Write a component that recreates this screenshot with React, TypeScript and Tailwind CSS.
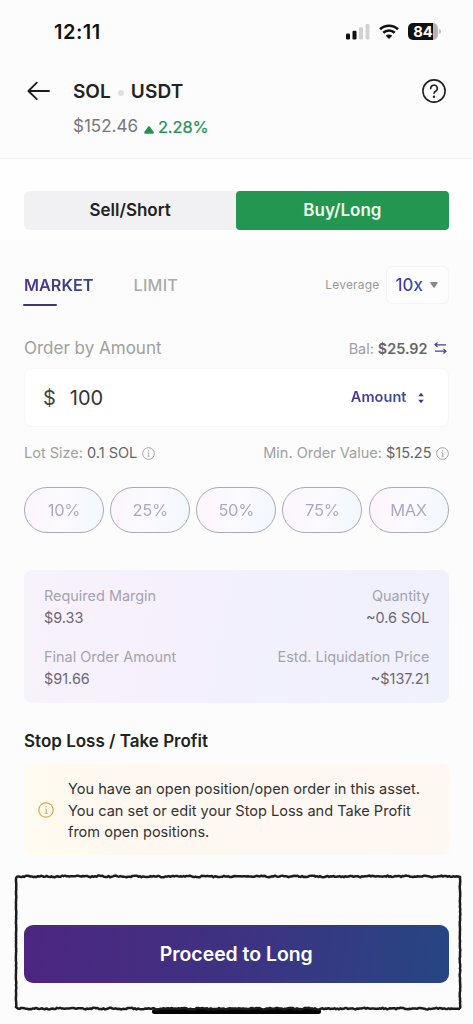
import React from "react";

const percents = ["10%", "25%", "50%", "75%", "MAX"];

// Hand-drawn looking stroke running round the proceed button
const roughPath = () => {
  const noise = (i: number) => {
    const n = Math.sin(i * 12.9898) * 43758.5453;
    return (n - Math.floor(n) - 0.5) * 1.3 + Math.sin(i * 0.35) * 0.3;
  };
  const pts: string[] = [];
  for (let x = 3; x < 445; x += 1.5) pts.push(`${x} ${(2.4 + noise(x)).toFixed(2)}`);
  for (let y = 3; y < 134; y += 1.5) pts.push(`${(446 + noise(y) * 0.4).toFixed(2)} ${y}`);
  for (let x = 445; x > 3; x -= 1.5) pts.push(`${x} ${(134.6 + noise(x + 5)).toFixed(2)}`);
  for (let y = 133; y > 3; y -= 1.5) pts.push(`${(2.1 + noise(y) * 0.3).toFixed(2)} ${y}`);
  return `M${pts.join("L")}Z`;
};

const InfoIcon = ({ className }: { className: string }) => (
  <svg viewBox="0 0 16 16" fill="none" stroke="currentColor" className={className}>
    <circle cx="8" cy="8" r="7.2" strokeWidth="1.2" />
    <path d="M7 7h1.2v4.3M6.8 11.4h2.8" strokeWidth="1" />
    <circle cx="8" cy="4.8" r=".75" fill="currentColor" stroke="none" />
  </svg>
);

const StatusBar = () => (
  <div className="flex h-[62px] items-center pt-px pr-[32px] pl-[54px]">
    <span className="text-[20px] font-semibold tracking-[0.5px] text-[#111]">12:11</span>
    <div className="ml-auto flex items-center">
      <svg viewBox="0 0 24 16" className="h-4 w-6">
        <rect x="0" y="9.5" width="4" height="6" rx="1.2" fill="#111" />
        <rect x="6.5" y="6.8" width="4" height="8.7" rx="1.2" fill="#111" />
        <rect x="13" y="3.3" width="4" height="12.2" rx="1.2" fill="#d2d2d2" />
        <rect x="19.5" y="0" width="4" height="15.5" rx="1.2" fill="#d2d2d2" />
      </svg>
      <svg viewBox="0 0 20 15" className="ml-[9px] h-[15px] w-5" fill="none" stroke="#111" strokeWidth="2.6">
        <path d="M1 5.3a13 13 0 0 1 18 0" />
        <path d="M4.3 8.8a8.2 8.2 0 0 1 11.4 0" />
        <path d="M10 15l-3.2-3.3a4.6 4.6 0 0 1 6.4 0z" fill="#111" stroke="none" />
      </svg>
      <div className="ml-[9px] flex h-[17px] w-[30px] items-center justify-center rounded-[5px] bg-[linear-gradient(90deg,#111_84%,#b5b5b5_84%)] pt-px text-[14.8px] font-bold text-white">
        84
      </div>
      <span className="ml-px h-[5px] w-[2px] rounded-r-full bg-[#c4c4c4]"></span>
    </div>
  </div>
);

const Header = () => (
  <div className="flex h-[97px] border-b border-[#f2f2f2] pr-[27px] pl-[27px]">
    <svg viewBox="0 0 24 20" className="mt-[19px] h-5 w-6" fill="none" stroke="#1b1b1b" strokeWidth="1.8" strokeLinecap="round" strokeLinejoin="round">
      <path d="M22 10H1.5M9.8 1.6L1.4 10l8.4 8.2" />
    </svg>
    <div className="ml-[22px] pt-[18px]">
      <div className="flex h-6 items-center text-[19px] font-semibold text-[#222]">
        <span>SOL</span>
        <span className="mx-[7px] mt-0.5 h-[6px] w-[6px] rounded-full bg-[#e0e0e0]"></span>
        <span className="tracking-[0.2px]">USDT</span>
      </div>
      <div className="mt-[11px] flex h-6 items-center text-[17px]">
        <span className="text-[#777]">$152.46</span>
        <svg viewBox="0 0 10 8" className="mt-[5px] ml-[6px] h-2 w-[10px]" fill="#239255">
          <path d="M4.2.6q.8-.9 1.6 0L9.7 6q.6 1.8-1.2 1.8h-7Q-.3 7.8.3 6z" />
        </svg>
        <span className="ml-[4px] text-[16.5px] tracking-[-0.15px] text-[#239255] [-webkit-text-stroke:0.2px_#239255]">2.28%</span>
      </div>
    </div>
    <svg viewBox="0 0 24 24" className="mt-[17px] ml-auto h-6 w-6" fill="none" stroke="#222" strokeWidth="1.6" strokeLinecap="round">
      <circle cx="12" cy="12" r="11.1" />
      <path d="M8.7 9.6a3.3 3.3 0 1 1 5 2.6c-1 .6-1.7 1.2-1.7 2.1" />
      <circle cx="12" cy="17.7" r="1.2" fill="#222" stroke="none" />
    </svg>
  </div>
);

const OrderForm = () => (
  <div className="pr-[24.5px] pl-6">
    <div className="flex h-[59px] items-center pt-px">
      <div className="flex gap-10 text-[16.3px]">
        <div className="relative">
          <span className="bg-linear-to-r from-[#50338e] to-[#31457f] bg-clip-text font-semibold text-transparent">MARKET</span>
          <span className="absolute top-[31px] -left-px h-[2.5px] w-[34px] rounded-xs bg-[#3c347f]"></span>
        </div>
        <span className="font-medium tracking-[0.2px] text-[#aaa]">LIMIT</span>
      </div>
      <span className="ml-auto text-[12px] tracking-[0.2px] text-[#999]">Leverage</span>
      <div className="ml-[6px] flex h-[38px] w-[63px] items-center rounded-md border border-[#f5f5f7] bg-[#fdfdfe] pl-[9px]">
        <span className="mt-px bg-linear-to-r from-[#5030a8] to-[#3158a8] bg-clip-text text-[17px] font-medium text-transparent">10x</span>
        <svg viewBox="0 0 8 6" className="ml-[7px] h-[6px] w-2" fill="#888">
          <path d="M1.2 0h5.6q1.6 0 .7 1.3L4.8 5.2q-.8 1-1.6 0L.5 1.3Q-.4 0 1.2 0z" />
        </svg>
      </div>
    </div>

    <div className="mt-[22px] flex h-6 items-center">
      <span className="mt-px text-[17px] text-[#a0a0a0]">Order by Amount</span>
      <span className="mt-px ml-auto text-[14.4px] text-[#a0a0a0]">
        Bal: <span className="font-semibold text-[#666]">$25.92</span>
      </span>
      <svg viewBox="0 0 13 12" className="mr-[2px] ml-[6px] h-3 w-[13px]" fill="none" stroke="#4b3b99" strokeWidth="1.2">
        <path d="M12 2.8H1M3.5.5L1 2.8l2.500 2.300M1 9.200h11M9.500 6.900L12 9.200l-2.500 2.300" />
      </svg>
    </div>

    <div className="mt-[8px] flex h-[59px] items-center rounded-lg border border-[#f7f7f7] bg-white pr-[23px] pl-[18px]">
      <span className="text-[20px] text-[#444]">$</span>
      <span className="ml-[14px] text-[20px] text-[#333]">100</span>
      <span className="mt-px ml-auto bg-linear-to-r from-[#5030a0] to-[#31509a] bg-clip-text text-[14.6px] font-semibold text-transparent">Amount</span>
      <svg viewBox="0 0 8 12" className="ml-[10px] h-3 w-2" fill="#40358f">
        <path d="M4 .8L6.8 4.2H1.2zM4 11.2L1.2 7.8h5.6z" />
      </svg>
    </div>

    <div className="mt-[14px] flex h-6 items-center text-[14.5px] text-[#a0a0a0]">
      <span>
        Lot Size: <span className="text-[#666]">0.1 SOL</span>
      </span>
      <InfoIcon className="ml-[5px] h-[13px] w-[13px]" />
      <span className="ml-auto">
        Min. Order Value: <span className="text-[#666]">$15.25</span>
      </span>
      <InfoIcon className="ml-1 h-[13px] w-[13px]" />
    </div>

    <div className="mt-[22px] flex justify-between">
      {percents.map((p) => (
        <div
          key={p}
          className="flex h-[46px] w-20 items-center justify-center rounded-full border border-[#aaa8bd] bg-[linear-gradient(100deg,#fdf5fb,#fbfaff_50%,#f2f7ff)]"
        >
          <span className="bg-linear-to-r from-[#afa0c5] to-[#a6abc8] bg-clip-text text-[16.5px] tracking-[-0.3px] text-transparent">{p}</span>
        </div>
      ))}
    </div>

    <div className="mt-[37px] flex h-[133px] justify-between rounded-lg bg-[linear-gradient(100deg,#f8f2fb,#f6f0fd_35%,#f2f0fd_55%,#eff1fc)] pt-[14.5px] pr-[19px] pl-5 text-[14.45px] leading-[22px] text-[#a5a3ae]">
      <div>
        <p>Required Margin</p>
        <p className="text-[#6a6874]">$9.33</p>
        <p className="mt-[17px]">Final Order Amount</p>
        <p className="text-[#6a6874]">$91.66</p>
      </div>
      <div className="text-right">
        <p>Quantity</p>
        <p className="text-[#6a6874]">~0.6 SOL</p>
        <p className="mt-[17px]">Estd. Liquidation Price</p>
        <p className="text-[#6a6874]">~$137.21</p>
      </div>
    </div>

    <h2 className="mt-[26px] text-[17px] leading-6 font-semibold text-[#222]">Stop Loss / Take Profit</h2>

    <div className="mt-[11px] flex h-[91px] items-center rounded-md bg-[linear-gradient(90deg,#fffbf0,#fff7f0_30%,#fef8f3)] pl-[14px]">
      <InfoIcon className="h-4 w-4 text-[#d9ab45]" />
      <p className="mt-1 ml-[14px] text-[14.55px] leading-[21.7px] whitespace-nowrap text-[#333]">
        You have an open position/open order in this asset.
        <br />
        You can set or edit your Stop Loss and Take Profit
        <br />
        from open positions.
      </p>
    </div>
  </div>
);

const ProceedBar = () => (
  <div className="relative mt-[69.5px] pr-[24.5px] pl-6">
    <button
      type="button"
      className="h-[58px] w-full rounded-[9px] bg-[linear-gradient(100deg,#4d2681,#3e3282_50%,#264682)] pt-0.5 text-[19.4px] font-semibold text-white"
    >
      Proceed to Long
    </button>
    <svg viewBox="0 0 450 138" className="pointer-events-none absolute -top-[51px] left-[14px] h-[138px] w-[450px]" fill="none" stroke="#1c1c1c" strokeWidth="2.5" strokeLinejoin="round">
      <path d={roughPath()} />
    </svg>
    <div className="mt-[26px] ml-[128px] h-[5.5px] w-[169px] rounded-full bg-black"></div>
  </div>
);

const App = () => {
  return (
    <div className="h-[1024px] w-[473px] overflow-hidden bg-[#fcfcfc] font-[Inter,sans-serif]">
      <StatusBar />
      <Header />
      <div className="h-[81px] bg-[#fefefe] pt-[32px] pr-[24.5px] pl-6">
        <div className="flex h-[38.5px] items-center rounded-md bg-[#f1f1f4] text-[17px] font-semibold">
          <span className="flex-1 text-center text-[#222]">Sell/Short</span>
          <span className="flex h-full flex-1 items-center justify-center rounded-[4px] bg-[#239651] text-[#eefbe9]">Buy/Long</span>
        </div>
      </div>
      <div className="pt-[15px]">
        <OrderForm />
      </div>
      <ProceedBar />
    </div>
  );
};

export default App;
